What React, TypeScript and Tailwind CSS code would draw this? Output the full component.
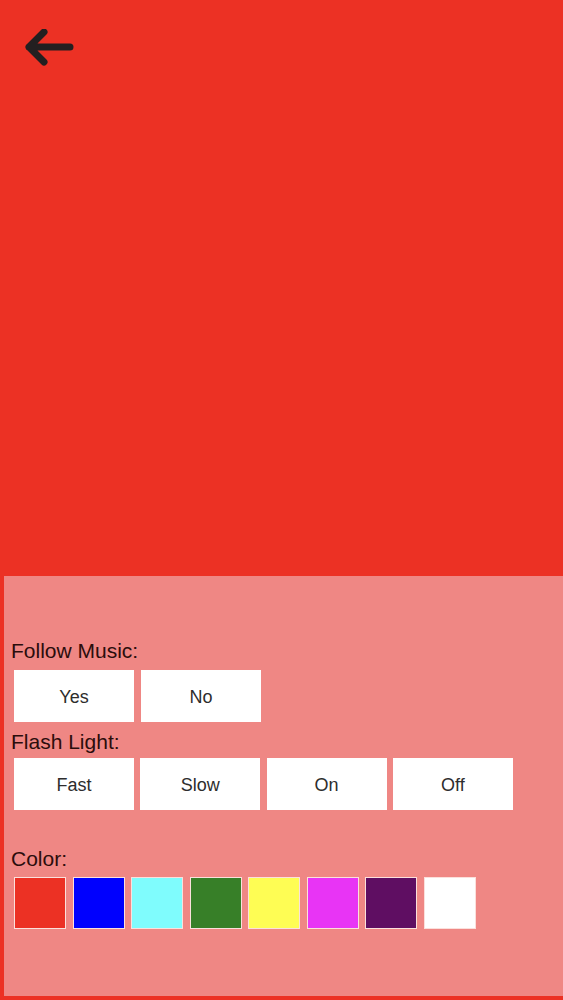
import React, { useState } from "react";

const swatches = [
  "#ec3124",
  "#0000fe",
  "#7ffcfd",
  "#377f28",
  "#fefd54",
  "#e834f5",
  "#5f0e62",
  "#ffffff",
];

function BackArrow() {
  return (
    <svg width="52" height="40" viewBox="0 0 52 40" fill="none">
      <path
        d="M5 18 H46 M20 3 L5 18 L20 33"
        stroke="#231f20"
        strokeWidth="7"
        strokeLinecap="round"
        strokeLinejoin="round"
      />
    </svg>
  );
}

function Option({ label, onClick }: { label: string; onClick?: () => void }) {
  return (
    <button
      onClick={onClick}
      className="flex h-[52px] w-[120px] items-center justify-center bg-white pt-[2px] text-[18px] text-[#2d2d2d]"
    >
      {label}
    </button>
  );
}

export default function App() {
  const [color, setColor] = useState(swatches[0]);

  return (
    <div
      className="flex h-[1000px] w-[563px] flex-col overflow-hidden bg-[#ec3226] font-['Liberation_Sans',Arial,sans-serif]"
      style={{ backgroundColor: color === "#ffffff" ? "#ec3226" : color }}
    >
      <div className="h-[576px] pl-[24px] pt-[29px]">
        <BackArrow />
      </div>
      <div className="ml-[4px] mb-[4px] flex-1 bg-[#ef8784] pl-[7px] pt-[63px]">
        <div className="text-[21px] leading-[24px] text-[#2b0d0c]">Follow Music:</div>
        <div className="ml-[3px] mt-[7px] flex gap-[7px]">
          <Option label="Yes" />
          <Option label="No" />
        </div>
        <div className="mt-[8px] text-[21px] leading-[24px] text-[#2b0d0c]">Flash Light:</div>
        <div className="ml-[3px] mt-[4px] flex gap-[6.3px]">
          <Option label="Fast" />
          <Option label="Slow" />
          <Option label="On" />
          <Option label="Off" />
        </div>
        <div className="mt-[37px] text-[21px] leading-[24px] text-[#2b0d0c]">Color:</div>
        <div className="ml-[3px] mt-[6px] flex gap-[6.5px]">
          {swatches.map((c) => (
            <button
              key={c}
              onClick={() => setColor(c)}
              className="h-[52px] w-[52px] border border-[#fbe0dc]"
              style={{ backgroundColor: c }}
            />
          ))}
        </div>
      </div>
    </div>
  );
}
